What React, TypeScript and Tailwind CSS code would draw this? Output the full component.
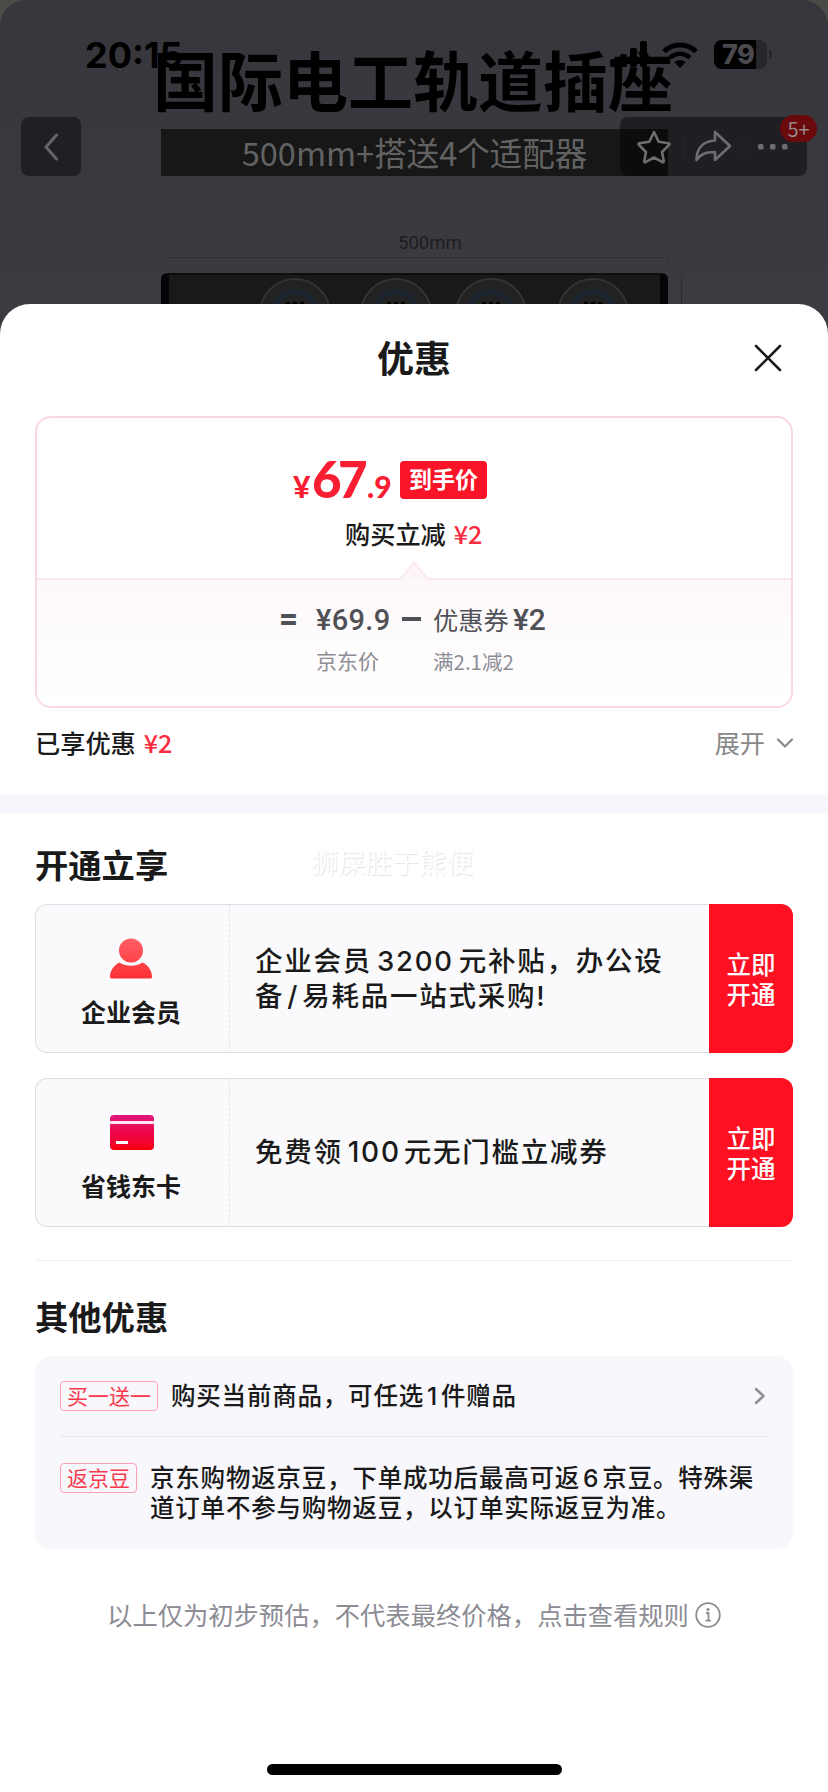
import type { ReactNode } from "react";

const FONT = "font-['Inter','Noto_Sans_CJK_SC',sans-serif]";

function StatusBar() {
  return (
    <div className="absolute inset-x-0 top-0 h-24 text-black">
      <span className="absolute left-[85px] top-[33px] text-[36px] leading-[44px] font-bold">
        20:15
      </span>
      <svg
        className="absolute left-[605px] top-[41px]"
        width="50"
        height="27"
        viewBox="0 0 50 27"
        fill="currentColor"
      >
        <rect x="5" y="18" width="7" height="8" rx="2" />
        <rect x="15" y="13" width="7" height="13" rx="2" />
        <rect x="25" y="7" width="7" height="19" rx="2" />
        <rect x="35" y="0" width="7" height="26" rx="2" />
      </svg>
      <svg
        className="absolute left-[662px] top-[41px]"
        width="36"
        height="27"
        viewBox="0 0 36 27"
        fill="none"
        stroke="currentColor"
      >
        <path d="M2 10.500a23 23 0 0 1 32 0" strokeWidth="5" />
        <path d="M8.200 16.800a14 14 0 0 1 19.600 0" strokeWidth="4.600" />
        <path d="M18 27l-5.600-5.800a8 8 0 0 1 11.200 0z" fill="currentColor" stroke="none" />
      </svg>
      <div className="absolute left-[714px] top-[40px] h-[29px] w-[53px] overflow-hidden rounded-lg bg-[#27262a]">
        <div className="h-full w-[42px] bg-black" />
        <span className="absolute left-[8px] top-0 text-[27px] leading-[29px] font-extrabold tracking-[-0.500px] text-[#4a494e]">
          79
        </span>
      </div>
      <div className="absolute left-[769px] top-[50px] h-[9px] w-[3px] rounded-r bg-[#27262a]" />
    </div>
  );
}

const SOCKETS = [98, 199, 294, 396];

// Dimmed product photo behind the sheet
function ProductPhoto() {
  return (
    <div className="absolute inset-0">
      <div className="absolute left-[153px] top-[31px] font-['Noto_Sans_CJK_SC',sans-serif] text-[65px] leading-[94px] font-bold whitespace-nowrap text-black">
        国际电工轨道插座
      </div>
      <div className="absolute left-[161px] top-[129px] flex h-[47px] w-[507px] items-center justify-center bg-[#171717] font-['Noto_Sans_CJK_SC',sans-serif] text-[32.500px] leading-none text-[#626262]">
        500mm+搭送4个适配器
      </div>
      <div className="absolute left-[398px] top-[232px] font-['Roboto',sans-serif] text-[18.500px] leading-[22px] text-[#1e1d23]">
        500mm
      </div>
      <div className="absolute left-[167px] top-[257px] h-px w-[496px] bg-[#2f2e34]" />
      <div className="absolute left-[161px] top-[252px] h-[10px] w-px bg-[#343339]" />
      <div className="absolute left-[667px] top-[252px] h-[10px] w-px bg-[#343339]" />
      <div className="absolute left-[681px] top-[274px] h-8 w-px bg-[#2c2b31]" />
      <div className="absolute left-[676px] top-[273px] h-px w-[11px] bg-[#343339]" />
      <div className="absolute left-[161px] top-[273px] h-9 w-[507px] overflow-hidden rounded-t-md border-x-8 border-t-2 border-x-[#050507] border-t-[#0d0d0d] bg-[#191919]">
        {SOCKETS.map((x) => (
          <div
            key={x}
            className="absolute top-[3px] size-[72px] rounded-full border-2 border-[#34332f] bg-[#222223]"
            style={{ left: x - 8 }}
          >
            <div className="absolute inset-[9px] rounded-full border-[6px] border-[#1c2430]" />
            <div className="absolute left-[25px] top-[22px] flex gap-[3px]">
              <span className="h-3 w-[4px] bg-black" />
              <span className="h-3 w-[4px] bg-black" />
              <span className="h-3 w-[4px] bg-black" />
            </div>
          </div>
        ))}
      </div>
    </div>
  );
}

function TopActions() {
  return (
    <>
      <div className="absolute left-[21px] top-[117px] flex h-[59px] w-[60px] items-center justify-center rounded-lg bg-[#201f23] text-[#656567]">
        <svg width="16" height="28" viewBox="0 0 16 28" fill="none" stroke="currentColor" strokeWidth="3" strokeLinecap="round" strokeLinejoin="round">
          <path d="M13.500 2 3 14l10.500 12" />
        </svg>
      </div>
      <div className="absolute left-[620px] top-[117px] h-[59px] w-[187px] rounded-lg bg-black/45 text-[#6e6e70]">
        <svg width="187" height="59" viewBox="0 0 187 59" fill="none" stroke="currentColor" strokeWidth="2.600" strokeLinejoin="round" strokeLinecap="round">
          <path d="m34 15 4.700 9.800 10 1.400c.8.1 1 1 .4 1.600L42 35l1.800 9.200c.1.800-.6 1.300-1.300.9L34 40.500l-8.500 4.600c-.7.400-1.400-.1-1.300-.9L26 35l-7.100-7.200c-.6-.6-.4-1.500.4-1.600l10-1.400z" />
          <path d="M95 15v8.500c-12 .5-18.500 8-18.500 19.500 4.500-6 9-8 18.500-8v8l15-14z" />
          <path d="M64 17v26M124 17v26" stroke="#29282c" strokeWidth="1" />
          <g fill="currentColor" stroke="none">
            <rect x="138" y="27" width="5.500" height="5.500" rx="1.500" />
            <rect x="150" y="27" width="5.500" height="5.500" rx="1.500" />
            <rect x="162" y="27" width="5.500" height="5.500" rx="1.500" />
          </g>
        </svg>
      </div>
      <div className="absolute left-[780px] top-[115px] flex h-[27px] w-[37px] items-center justify-center rounded-full bg-[#6a0a0d] font-['Noto_Sans_CJK_SC',sans-serif] text-[20px] leading-none text-[#99898a]">
        5+
      </div>
    </>
  );
}

function PriceCard() {
  return (
    <div className="mx-[35px] mt-[27px] flex h-[292px] flex-col overflow-hidden rounded-2xl border-2 border-[#f9d9e0]">
      <div className="relative h-[162px] shrink-0 border-b-2 border-[#fbe9ed] pt-[43px]">
        <div className="ml-[256px] flex h-[38px] items-end text-[#fa1e32]">
          <span className="flex translate-y-[6px] items-baseline font-['Lato','Noto_Sans_CJK_SC',sans-serif] leading-[38px] font-black">
            <span className="w-[19px] text-[30px]">¥</span>
            <span className="w-[55px] text-[51px] tracking-[-3.500px]">67</span>
            <span className="text-[30px]">.9</span>
          </span>
          <span className="ml-auto mr-[304px] flex h-[38px] w-[87px] items-center justify-center rounded bg-[#fa1428] pb-[3px] font-['Noto_Sans_CJK_SC',sans-serif] text-[23px] leading-none font-bold text-white">
            到手价
          </span>
        </div>
        <div className="mt-[16px] ml-[308px] flex items-center gap-2 font-['Noto_Sans_CJK_SC',sans-serif] text-[25.200px] leading-[36px] font-medium text-[#1a1a1a]">
          购买立减 <span className="text-[#fa2c3e]">¥2</span>
        </div>
        <svg className="absolute left-[362px] -bottom-[2px]" width="30" height="20" viewBox="0 0 30 20">
          <path d="M0 19h1.500L15 2l13.500 17H30v1H0z" fill="#fdf6f8" />
          <path d="M0 19h1.500L15 2l13.500 17H30" fill="none" stroke="#fbe5ea" strokeWidth="1.500" />
        </svg>
      </div>
      <div className="flex grow bg-linear-to-b from-[#fdf8fa] to-white pt-[20px] pl-[242px] font-['Noto_Sans_CJK_SC',sans-serif] text-[25.300px] leading-[38px] text-[#505157]">
        <span className="w-[37px] font-['Roboto',sans-serif] text-[33px] font-extrabold">=</span>
        <div className="w-[86px]">
          <div className="translate-y-px font-['Roboto','Noto_Sans_CJK_SC',sans-serif] text-[29px] font-medium tracking-[0.300px]">¥69.9</div>
          <div className="mt-[5px] text-[21px] leading-[34px] text-[#8d8d95]">京东价</div>
        </div>
        <div className="mt-[17px] h-[4px] w-[19px] bg-[#505157]" />
        <div className="ml-[12px]">
          <div className="flex items-center whitespace-nowrap">
            优惠券
            <span className="ml-[4px] translate-y-px font-['Roboto','Noto_Sans_CJK_SC',sans-serif] text-[30px] font-medium">¥2</span>
          </div>
          <div className="mt-[6px] text-[20.500px] leading-[35px] text-[#8d8d95]">
            满2.1减2
          </div>
        </div>
      </div>
    </div>
  );
}

type OfferProps = {
  icon: ReactNode;
  name: string;
  children: ReactNode;
};

function Offer({ icon, name, children }: OfferProps) {
  return (
    <div className="flex h-[149px] overflow-hidden rounded-xl bg-[#fafafc] inset-ring-1 inset-ring-[#dddee1]">
      <div className="flex w-[195px] flex-col items-center border-r border-dashed border-[#e3e4e7] pt-[33px] pr-[2px]">
        <div className="flex h-[43px] items-center">{icon}</div>
        <div className="mt-[12px] font-['Noto_Sans_CJK_SC',sans-serif] text-[25px] leading-[38px] font-bold text-[#1a1a1a]">
          {name}
        </div>
      </div>
      <div className="flex grow items-center pl-[25px] text-[27.500px] leading-[35px] font-medium tracking-[1.750px] whitespace-nowrap text-[#1a1a1a]">
        <p>{children}</p>
      </div>
      <button className="w-[84px] bg-[#fd1022] font-['Noto_Sans_CJK_SC',sans-serif] text-[24.500px] leading-[30px] font-medium text-white">
        立即
        <br />
        开通
      </button>
    </div>
  );
}

function MemberIcon() {
  return (
    <svg width="42" height="41" viewBox="0 0 42 41">
      <defs>
        <linearGradient id="member" x1="0" y1="0" x2="0" y2="41" gradientUnits="userSpaceOnUse">
          <stop offset="0" stopColor="#ff5f66" />
          <stop offset="1" stopColor="#fd3034" />
        </linearGradient>
      </defs>
      <g fill="url(#member)">
        <circle cx="21" cy="12.500" r="12" />
        <path d="M9.500 24.500c7 4.300 16 4.300 23 0 5.500 2.500 9.500 8 9.500 14.500a1.500 1.500 0 0 1-1.500 1.500h-39A1.500 1.500 0 0 1 0 39c0-6.500 4-12 9.500-14.500z" />
      </g>
    </svg>
  );
}

function CardIcon() {
  return (
    <div className="relative ml-[2px] h-[35px] w-[44px] overflow-hidden rounded bg-linear-to-b from-[#e0157c] via-[#ee0648] to-[#f60000]">
      <div className="absolute inset-x-0 top-[6px] h-[3px] bg-[#fbe6f0]" />
      <div className="absolute bottom-[6px] left-[6px] h-[3px] w-[12px] bg-white" />
    </div>
  );
}

function Tag({ children }: { children: ReactNode }) {
  return (
    <span className="flex h-[30px] shrink-0 items-center rounded border border-[#ff9fb4] px-[6px] pb-px font-['Noto_Sans_CJK_SC',sans-serif] text-[21px] leading-none font-normal tracking-normal text-[#fa3a4c]">
      {children}
    </span>
  );
}

export default function App() {
  return (
    <div className={`relative h-[1792px] w-[828px] overflow-hidden bg-[#4b4a46] ${FONT}`}>
      <div className="absolute inset-x-0 top-0 h-[340px] rounded-t-[26px] bg-linear-to-b from-[#37363c] to-[#3c3b41]">
        <ProductPhoto />
        <StatusBar />
        <TopActions />
      </div>

      <div className="relative mt-[304px] flex h-[1488px] flex-col rounded-t-[30px] bg-white">
        <header className="relative flex h-[85px] shrink-0 items-end justify-center">
          <h1 className="mb-[5px] font-['Noto_Sans_CJK_SC',sans-serif] text-[37px] leading-[54px] font-bold text-[#1a1a1a]">
            优惠
          </h1>
          <svg
            className="absolute right-[46px] top-[40px]"
            width="28"
            height="28"
            viewBox="0 0 28 28"
            stroke="#1a1a1a"
            strokeWidth="2.600"
            strokeLinecap="round"
          >
            <path d="M2 2l24 24M26 2 2 26" />
          </svg>
        </header>

        <PriceCard />

        <div className="mx-[35px] mt-[15px] flex h-[40px] items-center font-['Noto_Sans_CJK_SC',sans-serif] text-[25.200px] leading-none font-medium text-[#1a1a1a]">
          已享优惠
          <span className="ml-2 text-[#fa2c3e]">¥2</span>
          <span className="ml-auto font-normal text-[#888]">展开</span>
          <svg className="-mr-px ml-[11px]" width="18" height="11" viewBox="0 0 18 11" fill="none" stroke="#888" strokeWidth="2.200" strokeLinecap="round" strokeLinejoin="round">
            <path d="M2 1.500l7 7 7-7" />
          </svg>
        </div>

        <div className="mt-[31px] h-[19px] shrink-0 bg-[#f6f6fd]" />

        <section className="mx-[35px] mt-[27px]">
          <div className="flex h-[48px] items-center font-['Noto_Sans_CJK_SC',sans-serif]">
            <h2 className="text-[33.300px] leading-none font-bold text-[#1a1a1a]">
              开通立享
            </h2>
            <span className="mb-[5px] ml-[143px] text-[27px] leading-none text-white [text-shadow:1px_1px_1px_#e4e4e4]">
              狮屎胜于熊便
            </span>
          </div>
          <div className="mt-[16px] flex flex-col gap-[25px]">
            <Offer icon={<MemberIcon />} name="企业会员">
              企业会员<span className="mx-[5px]">3200</span>元补贴，办公设
              <br />
              备<span className="mx-[3px]">/</span>易耗品一站式采购!
            </Offer>
            <Offer icon={<CardIcon />} name="省钱东卡">
              免费领<span className="ml-[5px] mr-[3px] text-[28px]">100</span>元无门槛立减券
            </Offer>
          </div>
        </section>

        <div className="mx-[35px] mt-[33px] h-px shrink-0 bg-[#f0f0f2]" />

        <section className="mx-[35px] mt-[31px]">
          <h2 className="font-['Noto_Sans_CJK_SC',sans-serif] text-[33.300px] leading-[48px] font-bold text-[#1a1a1a]">
            其他优惠
          </h2>
          <div className="mt-[16px] h-[193px] rounded-2xl bg-[#f7f7fc] px-[25px] text-[24.500px] leading-[30px] font-medium tracking-[0.800px] text-[#1a1a1a]">
            <div className="flex h-[81px] items-center border-b border-[#e6e7eb] whitespace-nowrap">
              <Tag>买一送一</Tag>
              <p className="ml-[13px]">
                购买当前商品，可任选<span className="mx-[3px]">1</span>件赠品
              </p>
              <svg className="ml-auto mr-[2px]" width="12" height="18" viewBox="0 0 12 18" fill="none" stroke="#8c8c92" strokeWidth="2.400" strokeLinecap="round" strokeLinejoin="round">
                <path d="M2 2l7.500 7L2 16" />
              </svg>
            </div>
            <div className="flex items-start pt-[26px] whitespace-nowrap">
              <Tag>返京豆</Tag>
              <p className="ml-[13px]">
                京东购物返京豆，下单成功后最高可返
                <span className="mx-[3px]">6</span>京豆。特殊渠
                <br />
                道订单不参与购物返豆，以订单实际返豆为准。
              </p>
            </div>
          </div>
        </section>

        <div className="mt-[47px] flex h-[38px] items-center justify-center font-['Noto_Sans_CJK_SC',sans-serif] text-[25.300px] leading-none text-[#8c8c94]">
          以上仅为初步预估，不代表最终价格，点击查看规则
          <svg className="ml-[6px]" width="26" height="26" viewBox="0 0 26 26" fill="none" stroke="currentColor" strokeWidth="1.800">
            <circle cx="13" cy="13" r="11.800" />
            <path d="M11 11h2.500v7.500M10.500 18.700h5.500" />
            <circle cx="13" cy="7.500" r="1.600" fill="currentColor" stroke="none" />
          </svg>
        </div>

        <div className="mx-auto mt-auto mb-[17px] h-[11px] w-[295px] rounded-full bg-black" />
      </div>
    </div>
  );
}
